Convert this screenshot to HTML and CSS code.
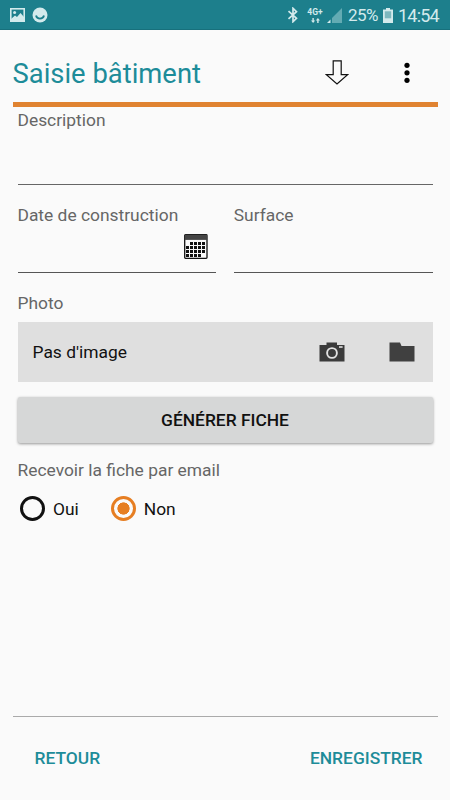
FILE: index.html
```html
<!DOCTYPE html>
<html lang="fr">
<head>
    <meta charset="UTF-8">
    <meta name="viewport" content="width=device-width, initial-scale=1.0">
    <title>Saisie bâtiment</title>
    <link rel="stylesheet" href="styles.css">
</head>
<body>
    <!-- --- STATUS BAR --- -->
    <div class="status-bar">
        <svg class="status-picture" width="15" height="14" viewBox="0 0 15 14">
            <rect x="0.8" y="0.8" width="13.4" height="12.4" fill="none" stroke="#d3eaec" stroke-width="1.6"/>
            <circle cx="4.6" cy="4.6" r="1.5" fill="#d3eaec"/>
            <path d="M1 11 L5 7.5 L7 9 L10.5 5 L14 9 V13 H1 Z" fill="#d3eaec"/>
        </svg>
        <svg class="status-smile" width="16" height="16" viewBox="0 0 16 16">
            <circle cx="8" cy="8" r="7.5" fill="#d3eaec"/>
            <path d="M4 8.5 C5 12.6 11 12.6 12 8.5" fill="none" stroke="#1d7f8c" stroke-width="1.8"/>
        </svg>
        <svg class="status-bluetooth" width="12" height="16" viewBox="0 0 12 16">
            <path d="M1.5 4.2 L9.5 11.3 L6 14.7 V1.3 L9.5 4.7 L1.5 11.8" fill="none" stroke="#d3eaec" stroke-width="1.7"/>
        </svg>
        <div class="network">
            <span>4G+</span>
            <svg width="9" height="5" viewBox="0 0 9 5">
                <path d="M0 2.4 H1.4 V0 H2.8 V2.4 H4.2 L2.1 5 Z M4.8 2.6 L6.9 0 L9 2.6 H7.6 V5 H6.2 V2.6 Z" fill="#d3eaec"/>
            </svg>
        </div>
        <svg class="status-signal" width="15" height="15" viewBox="0 0 15 15">
            <path d="M5 10 L15 0 V15 H5 Z" fill="#63abb3"/>
            <path d="M0 15 L3.5 11.5 V15 Z" fill="#d3eaec"/>
        </svg>
        <span class="battery-level">25%</span>
        <svg class="status-battery" width="10" height="15" viewBox="0 0 10 15">
            <path d="M3 0 H7 V1.5 H10 V15 H0 V1.5 H3 Z" fill="#d3eaec"/>
            <rect x="1.8" y="3.3" width="6.4" height="7" fill="#7db7be"/>
        </svg>
        <span class="clock">14:54</span>
    </div>

    <!-- --- HEADER --- -->
    <header class="header">
        <h1>Saisie bâtiment</h1>
        <svg class="icon-download" width="24" height="25" viewBox="0 0 24 25">
            <path d="M8.2 0.8 H16.2 V14.6 H22.6 L12 24 L1.4 14.6 H8.2 Z" fill="none" stroke="#111" stroke-width="1.2"/>
        </svg>
        <svg class="icon-more" width="6" height="22" viewBox="0 0 6 22">
            <circle cx="3" cy="3.3" r="2.6"/>
            <circle cx="3" cy="10.8" r="2.6"/>
            <circle cx="3" cy="18.3" r="2.6"/>
        </svg>
    </header>

    <!-- --- FORM --- -->
    <main class="form">
        <div class="field description">
            <label for="description">Description</label>
            <input type="text" id="description">
        </div>
        <div class="row">
            <div class="field">
                <label for="date">Date de construction</label>
                <div class="date-input">
                    <input type="text" id="date">
                    <svg width="24" height="25" viewBox="0 0 24 25">
                        <rect x="0.7" y="0.7" width="22.3" height="23.6" rx="0.8" fill="#fafafa" stroke="#111" stroke-width="1.3"/>
                        <rect x="0.7" y="0.7" width="22.3" height="5.2" fill="#444"/>
                        <path d="M6 9.5 H21 M2 13.5 H21 M2 17.5 H21 M2 21.5 H17" fill="none" stroke="#111" stroke-width="3" stroke-dasharray="3 1"/>
                    </svg>
                </div>
            </div>
            <div class="field">
                <label for="surface">Surface</label>
                <input type="text" id="surface">
            </div>
        </div>

        <p class="label">Photo</p>
        <div class="photo">
            <span>Pas d'image</span>
            <svg class="icon-camera" width="26" height="20" viewBox="0 0 26 20">
                <path d="M0.5 3 H7.5 V0.5 H18 V3 H25.5 V19.5 H0.5 Z" fill="#3b3b3b"/>
                <circle cx="13" cy="11" r="4.9" fill="none" stroke="#e2e2e2" stroke-width="1.9"/>
                <rect x="20" y="4.2" width="3.6" height="1.6" fill="#e2e2e2"/>
            </svg>
            <svg class="icon-folder" width="26" height="20" viewBox="0 0 26 20">
                <path d="M0.5 0.5 H11 L12.5 4 H25.5 V19.5 H0.5 Z" fill="#404040"/>
            </svg>
        </div>

        <button class="btn-generate">GÉNÉRER FICHE</button>

        <p class="label email-label">Recevoir la fiche par email</p>
        <div class="choices">
            <label class="choice"><input type="radio" name="email" value="oui">Oui</label>
            <label class="choice"><input type="radio" name="email" value="non" checked>Non</label>
        </div>
    </main>

    <!-- --- FOOTER --- -->
    <footer class="footer">
        <button class="btn-text">RETOUR</button>
        <button class="btn-text">ENREGISTRER</button>
    </footer>
</body>
</html>
```
FILE: styles.css
```css
/* --- RESET & GLOBAL STYLES --- */
* {
    margin: 0;
    padding: 0;
    box-sizing: border-box;
}

body {
    display: flex;
    flex-direction: column;
    height: 800px;
    background-color: #fafafa;
    font-family: Roboto, sans-serif;
    font-size: 17.4px;
    color: #111;
    overflow: hidden;
}

svg {
    display: block;
    flex-shrink: 0;
}

input,
button {
    font: inherit;
    border: none;
    outline: none;
    background: none;
}

/* --- STATUS BAR --- */
.status-bar {
    display: flex;
    align-items: center;
    height: 30px;
    padding: 1px 11px 0 10px;
    background-color: #1d7f8c;
    border-bottom: 1px solid #17707c;
    color: #d3eaec;
    white-space: nowrap;
}

.status-smile {
    margin-left: 7px;
}

.status-bluetooth {
    margin-left: auto;
}

.network {
    display: flex;
    flex-direction: column;
    align-items: center;
    gap: 1px;
    width: 16px;
    margin-left: 8px;
    font-size: 8.5px;
    font-weight: 700;
    line-height: 9px;
}

.status-signal {
    margin-left: 4px;
}

.battery-level {
    width: 30px;
    margin-left: 6px;
    font-size: 17px;
    letter-spacing: -0.6px;
}

.status-battery {
    margin-left: 5px;
}

.clock {
    width: 41px;
    margin-left: 5px;
    font-size: 18px;
    letter-spacing: -0.8px;
}

/* --- HEADER --- */
.header {
    display: flex;
    align-items: center;
    height: 77px;
    margin: 0 12.5px;
    padding-right: 28px;
    border-bottom: 5px solid #e08331;
}

.header h1 {
    flex: 1;
    padding-top: 15px;
    font-size: 27.4px;
    font-weight: 400;
    color: #1d8c99;
}

.icon-download {
    margin-top: 13px;
}

.icon-more {
    margin: 13px 0 0 55px;
}

/* --- FORM --- */
.form {
    flex: 1;
    padding: 1px 17.5px 0;
}

.field {
    display: flex;
    flex-direction: column;
}

.field label,
.label {
    line-height: 24px;
    color: #666;
}

.field input {
    width: 100%;
    height: 45px;
}

.description {
    height: 77px;
    border-bottom: 1px solid #666;
}

.row {
    display: grid;
    grid-template-columns: 1fr 1fr;
    gap: 17.5px;
    margin-top: 18px;
}

.row .field {
    height: 70px;
    border-bottom: 1px solid #555;
}

.date-input {
    display: flex;
    align-items: center;
    height: 38px;
    padding-right: 8px;
}

.date-input input {
    min-width: 0;
}

.row + .label {
    margin-top: 18px;
}

.photo {
    display: flex;
    align-items: center;
    height: 60px;
    margin-top: 7px;
    padding: 0 18px 0 15px;
    background-color: #dfdfdf;
}

.photo span {
    flex: 1;
}

.icon-folder {
    margin-left: 44px;
}

.btn-generate {
    display: block;
    width: 100%;
    height: 46px;
    margin-top: 15px;
    border-radius: 2px;
    background-color: #d6d7d7;
    box-shadow: 0 1px 3px rgba(0, 0, 0, 0.4);
    color: #111;
    font-weight: 500;
}

.email-label {
    margin-top: 15px;
}

.choices {
    display: flex;
    gap: 32px;
    margin: 14px 0 0 2.5px;
}

.choice {
    display: flex;
    align-items: center;
    gap: 8px;
}

.choice input {
    appearance: none;
    width: 25px;
    height: 25px;
    border: 3px solid #111;
    border-radius: 50%;
}

.choice input:checked {
    border-color: #e67e22;
    background: radial-gradient(circle, #e67e22 5.8px, transparent 6.4px);
}

/* --- FOOTER --- */
.footer {
    display: flex;
    align-items: center;
    justify-content: space-between;
    height: 84px;
    margin: 0 12.5px;
    padding: 0 15px 2px 22px;
    border-top: 1px solid #aaa;
}

.btn-text {
    color: #1d8c99;
    font-weight: 500;
}
```
